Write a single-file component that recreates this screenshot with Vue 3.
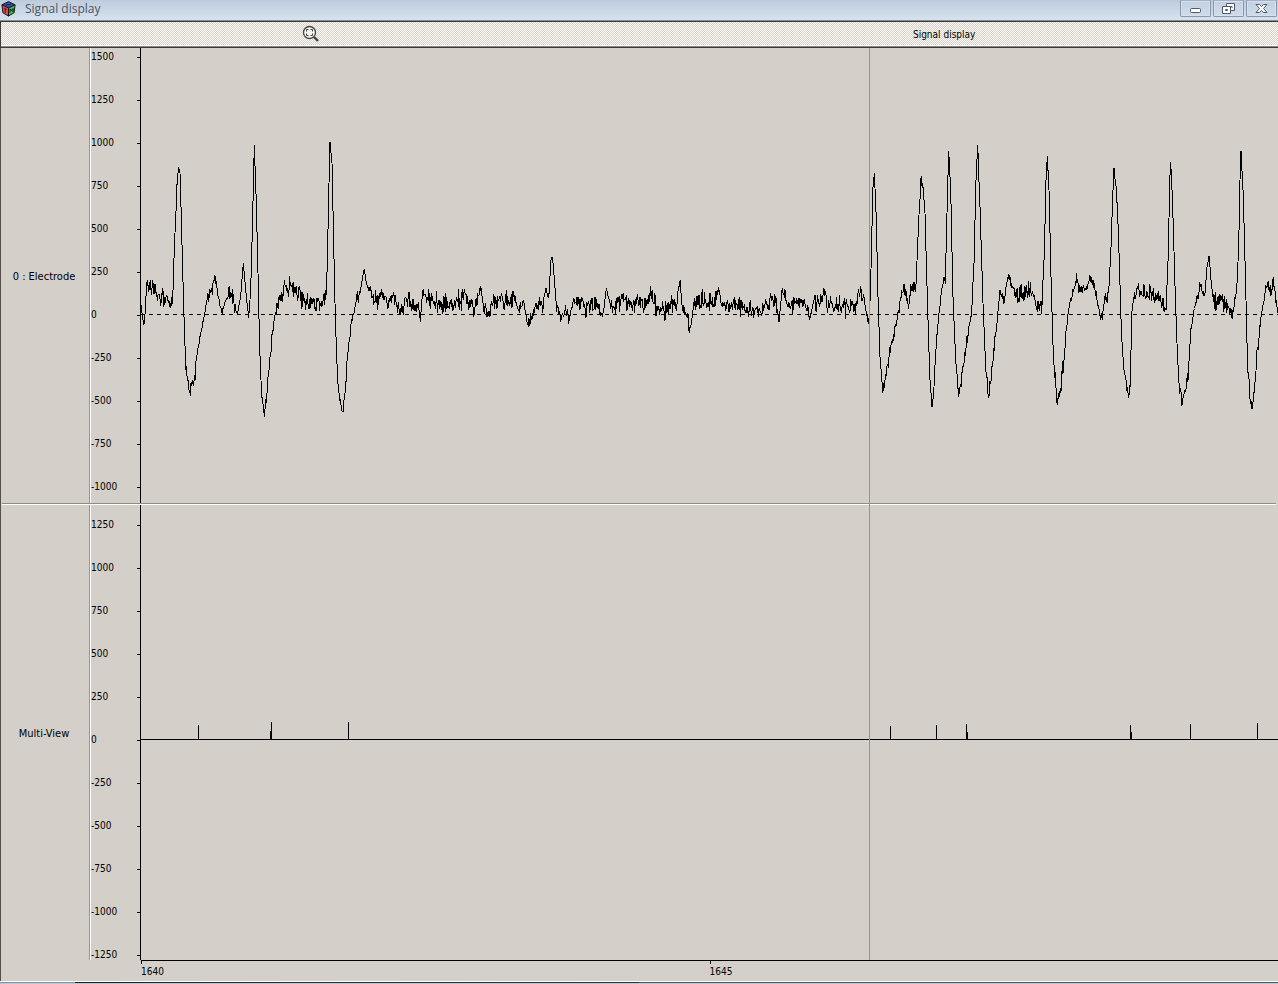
<script setup>
const scale = (from, to) => {
  const out = []
  for (let v = from; v >= to; v -= 250) out.push(v)
  return out
}
const upperScale = scale(1500, -1000)
const lowerScale = scale(1250, -1250)

// Key samples of the electrode trace, three units per pixel, each run with its own origin.
const runs = [
  { x: 130, y: 130, pts: '33,525 39,570 45,552 50,462 60,480 70,465 80,485 100,505 118,515 127,525 130,460 133,360 137,270 142,140 146,112 150,130 153,230 158,415 163,600 168,720 177,780 185,772 195,750 201,675 210,620 222,560 230,515 245,475 256,440 265,500 277,550 285,515 302,485 312,520 322,550 332,500 340,398 347,480 356,565 362,480 368,260 373,45 379,220 384,430 389,650 395,790 403,860 411,790 420,680 430,590 437,545 450,495 475,470 500,490 530,520 560,525 588,510 592,400 597,160 600,35 606,100 611,340 615,520 620,690 627,790 637,845 645,790 655,650 665,570 680,510 690,490' },
  { x: 360, y: 240, pts: '4,135 13,88 20,130 45,185 72,165 85,200 98,175 120,200 150,185 165,212 175,185 181,245 188,152 205,180 250,200 290,180 310,180 345,205 364,145 372,215 388,225 400,185 440,185 463,160 475,212 490,180 500,235 512,245 525,200 550,190 558,145 566,175 573,60 578,52 584,130 590,215 605,230 615,210 628,235 640,185 660,185 685,200 705,185 728,230 739,145 748,185' },
  { x: 610, y: 240, pts: '0,190 40,182 70,198 85,185 105,190 123,175 140,195 160,215 185,190 200,205 205,140 211,132 216,195 228,225 242,262 252,185 275,175 300,190 318,185 325,142 335,195 350,205 370,190 400,205 420,215 440,200 460,205 470,185 500,190 507,245 516,150 530,182 560,185 580,190 600,235 608,195 625,185 640,178 670,190 710,202 740,190 752,145 765,195 775,248' },
  { x: 860, y: 130, pts: '26,580 31,500 35,330 39,170 43,130 49,270 54,500 60,680 68,790 78,740 95,640 108,590 115,540 130,485 145,500 158,470 167,480 175,300 183,145 188,160 195,250 203,540 210,750 216,830 222,770 232,590 245,480 250,455 256,455 261,250 266,62 272,180 279,500 287,690 296,800 312,700 325,600 335,545 342,400 348,150 353,45 360,230 369,520 377,710 386,805 398,700 410,590 420,480 432,520 443,440 458,470 475,505 500,485 520,490 532,545 545,535 553,370 558,150 562,78 567,180 573,440 580,680 590,810 600,790 612,690 622,570 629,518' },
  { x: 1060, y: 130, pts: '30,515 48,460 68,490 88,450 98,455 112,510 122,570 127,565 134,500 145,500 152,380 158,200 162,115 169,175 176,330 184,600 192,720 205,798 212,770 214,560 220,510 230,480 250,495 268,485 295,500 318,540 325,370 329,150 332,95 338,230 346,500 351,640 357,760 365,825 375,780 385,740 392,600 400,555 412,495 425,465 435,490 441,410 447,378 454,460 460,515 490,520 518,550 530,480 536,350 540,150 543,62 549,180 556,430 562,680 569,790 576,838 583,790 593,650 605,550 615,490 623,460 640,480 650,510 652,550' },
]

const keys = runs.flatMap(r =>
  r.pts.split(' ').map(p => {
    const [x, y] = p.split(',').map(Number)
    return [r.x + x / 3, r.y + y / 3]
  }))

let seed = 41
const random = () => {
  seed = (seed * 16807) % 2147483647
  return seed / 2147483647 - 0.5
}

// Fill the gaps between key samples; slow stretches carry recording noise.
const samples = [keys[0]]
for (let i = 1; i < keys.length; i++) {
  const [x0, y0] = keys[i - 1]
  const [x1, y1] = keys[i]
  const n = Math.max(1, Math.round((x1 - x0) / 0.6))
  const slope = Math.abs((y1 - y0) / (x1 - x0))
  const noise = y0 > 340 ? 10 : slope < 1.5 ? 13 : slope < 4 ? 9 : 3
  for (let k = 1; k <= n; k++) {
    const t = k / n
    const wobble = k === n && slope > 1.5 ? 0 : (random() + random()) * noise
    samples.push([x0 + (x1 - x0) * t, y0 + (y1 - y0) * t + wobble])
  }
}
const trace = samples.map(([x, y]) => `${x.toFixed(1)},${y.toFixed(1)}`).join(' ')

const events = [
  [198, 725], [270, 731], [271, 722], [348, 722], [890, 726], [936, 725],
  [966, 724], [967, 732], [1130, 725], [1131, 732], [1190, 724], [1257, 723],
]
const eventPath = events.map(([x, y]) => `M${x + 0.5} ${y}V740`).join('')

let zeroPath = ''
for (let x = 141; x < 1278; x += 8) zeroPath += `M${x} 314.5h4`
</script>

<template>
  <div class="window">
    <header class="titlebar">
      <svg class="logo" viewBox="0 0 16 16" aria-hidden="true">
        <path d="M8 0L15 3.500L8 7L1 3.500Z" fill="#2f55bd" stroke="#111" />
        <path d="M1 3.500L8 7V15.500L2 12Z" fill="#f0424a" stroke="#111" />
        <path d="M15 3.500L8 7V15.500L14 12Z" fill="#35c052" stroke="#111" />
        <path d="M3 7L6 8.500M4.500 8V12M9.500 12V8L13 11V7M10 10L13 8" stroke="#111" stroke-width=".8" fill="none" />
        <path d="M5 3.500H9L11 2.500" stroke="#131b54" fill="none" />
      </svg>
      <h1>Signal display</h1>
      <div class="controls">
        <button type="button" aria-label="Minimize">
          <svg width="13" height="11" viewBox="0 0 13 11"><rect x="1.500" y="5.500" width="10" height="4" rx="1" fill="#fff" stroke="#50586a" /></svg>
        </button>
        <button type="button" aria-label="Restore">
          <svg width="13" height="11" viewBox="0 0 13 11">
            <path d="M4.500 .5H12.500V7.500H4.500Z" fill="#fff" stroke="#50586a" />
            <path d="M7 3.500H10V5" fill="none" stroke="#50586a" />
            <path d="M.5 3.500H8.500V10.500H.5Z" fill="#fff" stroke="#50586a" />
            <path d="M3.500 6.500H5.500V7.500H3.500Z" fill="#fff" stroke="#50586a" />
          </svg>
        </button>
        <button type="button" aria-label="Close">
          <svg width="13" height="11" viewBox="0 0 13 11"><path d="M1 1.500H4.500L6.500 3.500L8.500 1.500H12L8.500 5.500L12 9.500H8.500L6.500 7.500L4.500 9.500H1L4.500 5.500Z" fill="#fff" stroke="#50586a" /></svg>
        </button>
      </div>
    </header>

    <div class="toolbar">
      <div class="tool">
        <button type="button" class="zoom" aria-label="Zoom to fit">
          <svg width="18" height="18" viewBox="0 0 18 18" fill="none" stroke="#444">
            <circle cx="7.500" cy="7.500" r="6" fill="#f4f3ee" stroke-width="1.300" />
            <path d="M4.500 6.500V4.500H6.500M8.500 4.500H10.500V6.500M10.500 8.500V10.500H8.500M6.500 10.500H4.500V8.500" />
            <path d="M12 12L16 16" stroke-width="2.400" />
          </svg>
        </button>
      </div>
      <div class="caption">Signal display</div>
    </div>

    <main class="views">
      <section class="view upper">
        <h2 class="name">0 : Electrode</h2>
        <ul class="axis">
          <li v-for="v in upperScale" :key="v">{{ v }}</li>
        </ul>
        <svg class="plot" viewBox="141 48 1137 455" preserveAspectRatio="none" role="img" aria-label="Electrode signal">
          <path class="trace" :d="zeroPath" />
          <polyline class="trace" :points="trace" />
        </svg>
      </section>
      <hr class="divider">
      <section class="view lower">
        <h2 class="name">Multi-View</h2>
        <ul class="axis">
          <li v-for="v in lowerScale" :key="v">{{ v }}</li>
        </ul>
        <svg class="plot" viewBox="141 505 1137 455" preserveAspectRatio="none" role="img" aria-label="Detected events">
          <path class="trace" d="M141 739.500H1278" />
          <path class="trace" :d="eventPath" />
        </svg>
      </section>
      <div class="cursor-layer"><div class="cursor"></div></div>
    </main>
    <footer class="time"><span>1640</span><span>1645</span></footer>
    <div class="edge"></div>
  </div>
</template>

<style>
html,
body {
  margin: 0;
  background: #d4cfc8;
}
</style>

<style scoped>
.window {
  display: flex;
  flex-direction: column;
  box-sizing: border-box;
  min-height: 100vh;
  color: #000;
  background: #d4cfc8;
  font: 10px/10px "DejaVu Sans Condensed", "DejaVu Sans", sans-serif;
  overflow: hidden;
}
.titlebar {
  display: flex;
  align-items: center;
  height: 20px;
  padding: 0 1px;
  background: linear-gradient(#bdcbdc, #d5e3f0);
  border-bottom: 1px solid #8b8b87;
}
.logo {
  width: 15px;
  height: 16px;
  margin-bottom: 2px;
}
h1 {
  flex: 1;
  margin: 0 0 3px 9px;
  color: #4c5560;
  font: 12px/16px "Open Sans", sans-serif;
}
.controls {
  display: flex;
  align-self: flex-start;
  gap: 2px;
}
.controls button {
  display: grid;
  place-items: center;
  box-sizing: border-box;
  width: 31px;
  height: 17px;
  padding: 0;
  border: 1px solid #8796ad;
  border-top-color: #a4b2c6;
  border-radius: 0 0 2px 2px;
  background: linear-gradient(#c3d0e0, #cfdcea);
  box-shadow: inset 0 0 0 1px #d6e1ed;
}
.toolbar {
  display: flex;
  align-items: center;
  box-sizing: border-box;
  height: 27px;
  padding-bottom: 2px;
  border: 1px solid #3e3b38;
  border-right: 0;
  background: conic-gradient(#fbfaf6 25%, #d6d2ca 0 50%, #fbfaf6 0 75%, #d6d2ca 0) 0 0 / 2px 2px;
  box-shadow: inset 0 -1px #8b8781, inset 0 -2px #fff;
}
.tool {
  display: flex;
  justify-content: center;
  width: 48.5%;
}
.zoom {
  padding: 0;
  border: 0;
  background: none;
}
.zoom svg {
  display: block;
}
.caption {
  flex: 1;
  padding: 2px 10px 0 0;
  text-align: center;
}
.views {
  position: relative;
  flex: 1;
  display: flex;
  flex-direction: column;
  border-left: 1px solid #55504b;
}
.view {
  flex: 1;
  display: grid;
  grid-template-columns: 89px 51px minmax(0, 1fr);
}
.name {
  display: grid;
  place-items: center;
  margin: 0;
  padding: 2px 2px 0 0;
  font-size: 11px;
  font-weight: 400;
  border-right: 1px solid #99958f;
}
.axis {
  display: flex;
  flex-direction: column;
  justify-content: space-between;
  margin: 0;
  padding: 4px 0 11px;
  list-style: none;
  border-left: 1px solid #fff;
  border-right: 1px solid #000;
}
.lower .axis {
  padding: 15px 0 0;
}
.axis li {
  display: flex;
  align-items: center;
  justify-content: space-between;
  height: 10px;
}
.axis li::after {
  content: "";
  width: 3px;
  height: 1px;
  background: #000;
}
.plot {
  display: block;
  contain: size;
  width: 100%;
  height: 100%;
  shape-rendering: crispEdges;
}
.trace {
  fill: none;
  stroke: #000;
  stroke-width: 1;
  vector-effect: non-scaling-stroke;
}
.divider {
  width: calc(100% - 3px);
  height: 1px;
  margin: 0 2px 0 1px;
  border: 0;
  border-bottom: 1px solid #fff;
  background: #8f8b86;
}
.cursor-layer {
  position: absolute;
  inset: 0 0 0 140px;
  pointer-events: none;
}
.cursor {
  width: 64%;
  height: 100%;
  border-right: 1px solid #1fe51f;
}
.time {
  display: grid;
  grid-template-columns: 50% 50%;
  box-sizing: border-box;
  height: 21px;
  padding-left: 140px;
  border-left: 1px solid #55504b;
  background: linear-gradient(#000, #000) 140px 0 / 100% 1px no-repeat;
}
.time span {
  padding-top: 7px;
  background: linear-gradient(#000, #000) 0 0 / 1px 4px no-repeat;
}
.edge {
  height: 1px;
  border-top: 1px solid #fff;
  border-bottom: 1px solid #b9c6d3;
  background: linear-gradient(90deg, #8293a8 75px, #222 75px, #333 50%, #4b5663 50%);
}
</style>
